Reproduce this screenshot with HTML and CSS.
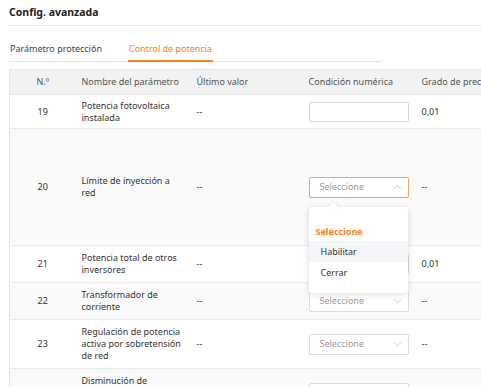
FILE: index.html
```html
<!DOCTYPE html>
<html lang="es">
<head>
<meta charset="utf-8">
<title>Config. avanzada</title>
<link rel="stylesheet" href="styles.css">
</head>
<body>
<div class="page">
  <div class="title">Config. avanzada</div>
  <div class="tabs">
    <div class="tab">Parámetro protección</div>
    <div class="tab active">Control de potencia</div>
  </div>
  <table class="grid">
    <colgroup>
      <col class="c-no"><col class="c-name"><col class="c-last"><col class="c-cond"><col class="c-prec">
    </colgroup>
    <thead>
      <tr><th class="num">N.º</th><th>Nombre del parámetro</th><th>Último valor</th><th>Condición numérica</th><th>Grado de precisión</th></tr>
    </thead>
    <tbody>
      <tr class="r19">
        <td class="num">19</td><td class="name">Potencia fotovoltaica instalada</td><td>--</td>
        <td><div class="input"></div></td><td>0,01</td>
      </tr>
      <tr class="r20 alt">
        <td class="num">20</td><td class="name">Límite de inyección a red</td><td>--</td>
        <td>
          <div class="anchor">
            <div class="select open"><span>Seleccione</span><svg class="chev" viewBox="0 0 10 6" width="9" height="6"><path d="M1 5.2 5 1.2 9 5.2" fill="none" stroke="#c4c4c4" stroke-width="0.9"/></svg></div>
            <div class="menu">
              <div class="menu-head">Seleccione</div>
              <div class="menu-item hover">Habilitar</div>
              <div class="menu-item">Cerrar</div>
            </div>
          </div>
        </td>
        <td>--</td>
      </tr>
      <tr class="r2">
        <td class="num">21</td><td class="name">Potencia total de otros inversores</td><td>--</td>
        <td><div class="input"></div></td><td>0,01</td>
      </tr>
      <tr class="r2 alt">
        <td class="num">22</td><td class="name">Transformador de corriente</td><td>--</td>
        <td><div class="select"><span>Seleccione</span><svg class="chev" viewBox="0 0 10 6" width="9" height="6"><path d="M1 1 5 5 9 1" fill="none" stroke="#c4c4c4" stroke-width="0.9"/></svg></div></td>
        <td>--</td>
      </tr>
      <tr class="r3">
        <td class="num">23</td><td class="name">Regulación de potencia activa por sobretensión de red</td><td>--</td>
        <td><div class="select"><span>Seleccione</span><svg class="chev" viewBox="0 0 10 6" width="9" height="6"><path d="M1 1 5 5 9 1" fill="none" stroke="#c4c4c4" stroke-width="0.9"/></svg></div></td>
        <td>--</td>
      </tr>
      <tr class="r3 alt">
        <td class="num">24</td><td class="name">Disminución de potencia activa por sobrefrecuencia</td><td>--</td>
        <td><div class="select"><span>Seleccione</span><svg class="chev" viewBox="0 0 10 6" width="9" height="6"><path d="M1 1 5 5 9 1" fill="none" stroke="#c4c4c4" stroke-width="0.9"/></svg></div></td>
        <td>--</td>
      </tr>
    </tbody>
  </table>
</div>
</body>
</html>
```
FILE: styles.css
```css
html, body {
  margin: 0;
  padding: 0;
  background: #fff;
  overflow: hidden;
}
body {
  width: 481px;
  height: 387px;
  font-family: "Noto Sans", "Open Sans", sans-serif;
  font-size: 9px;
  color: #333;
}
.page {
  padding-left: 9px;
}
.title {
  height: 26px;
  box-sizing: border-box;
  padding-top: 5px;
  line-height: 14px;
  font-size: 10.5px;
  font-weight: 700;
  color: #222;
  border-bottom: 1px solid #e8e8e8;
}
.tabs {
  display: flex;
  width: 372px;
  height: 25px;
  box-sizing: border-box;
  margin-top: 11px;
  border-bottom: 1px solid #e4e4e4;
  gap: 25px;
}
.tab {
  line-height: 14px;
  padding: 5px 1px 0;
  color: #444;
}
.tab.active {
  color: #f7801f;
  border-bottom: 2px solid #f7801f;
  margin-bottom: -1px;
}
.grid {
  margin-top: 7px;
  border-collapse: collapse;
  table-layout: fixed;
  width: 560px;
  border-left: 1px solid #e6e6e6;
}
.c-no { width: 66px; }
.c-name { width: 115px; }
.c-last { width: 112px; }
.c-cond { width: 113px; }
.c-prec { width: 154px; }
th, td {
  text-align: left;
  font-weight: 400;
  padding: 0 6px;
  line-height: 12px;
  vertical-align: middle;
  border-bottom: 1px solid #ececec;
}
th {
  height: 24px;
  background: #f2f2f2;
  color: #555;
  border-top: 1px solid #e6e6e6;
  border-bottom: 1px solid #e6e6e6;
  white-space: nowrap;
}
td.num, th.num { text-align: center; }
tr.alt td { background: #fafafa; }
tr.r19 td { height: 33px; }
tr.r20 td { height: 116px; }
tr.r2 td { height: 36px; }
tr.r3 td { height: 48px; }
.input {
  width: 100px;
  height: 20px;
  box-sizing: border-box;
  border: 1px solid #d6d6d6;
  border-radius: 2px;
  background: #fff;
}
.anchor { position: relative; }
.select {
  width: 100px;
  height: 21px;
  box-sizing: border-box;
  border: 1px solid #dcdcdc;
  border-radius: 2px;
  background: #fff;
  display: flex;
  align-items: center;
  justify-content: space-between;
  padding: 0 6px 0 10px;
  color: #999;
}
.select.open { border-color: #f7a25c; }
.chev { display: block; }
.menu {
  position: absolute;
  left: 0;
  top: 30px;
  width: 99px;
  height: 86px;
  box-sizing: border-box;
  background: #fff;
  border-radius: 2px;
  box-shadow: 0 1px 6px rgba(0, 0, 0, 0.15);
  padding-top: 15px;
  z-index: 2;
}
.menu::before {
  content: "";
  position: absolute;
  left: 21px;
  top: -4px;
  width: 7px;
  height: 7px;
  background: #fff;
  transform: rotate(45deg);
  box-shadow: -1px -1px 2px rgba(0, 0, 0, 0.06);
}
.menu-head {
  padding-left: 7px;
  height: 19px;
  line-height: 19px;
  color: #f7801f;
  font-weight: 700;
}
.menu-item {
  padding-left: 12px;
  height: 21px;
  line-height: 21px;
  color: #333;
}
.menu-item.hover { background: #f5f6fa; }
```
